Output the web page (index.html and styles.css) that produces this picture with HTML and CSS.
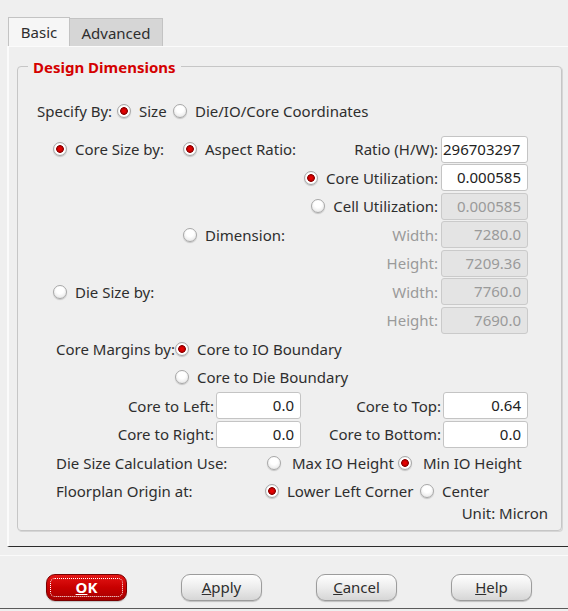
FILE: index.html
```html
<!DOCTYPE html>
<html>
<head>
<meta charset="utf-8">
<link rel="stylesheet" href="styles.css">
</head>
<body>
<div class="window">
  <div class="tabbar">
    <div class="tab tab-basic">Basic</div>
    <div class="tab tab-adv">Advanced</div>
  </div>
  <div class="pane">
    <div class="group">
      <div class="group-title">Design Dimensions</div>

      <div class="row row-specify">
        <span class="lbl-specify">Specify By:</span>
        <span class="radio w-size"><span class="dot on"></span>Size</span>
        <span class="radio"><span class="dot"></span>Die/IO/Core Coordinates</span>
      </div>

      <div class="block-size">
        <div class="row">
          <span class="c1 radio"><span class="dot on"></span>Core Size by:</span>
          <span class="c2 radio"><span class="dot on"></span>Aspect Ratio:</span>
          <span class="rlabel">Ratio (H/W):</span>
          <span class="field f-ratio">296703297</span>
        </div>
        <div class="row">
          <span class="c1"></span>
          <span class="c2"></span>
          <span class="rlabel radio"><span class="dot on"></span>Core Utilization:</span>
          <span class="field">0.000585</span>
        </div>
        <div class="row">
          <span class="c1"></span>
          <span class="c2"></span>
          <span class="rlabel radio"><span class="dot"></span>Cell Utilization:</span>
          <span class="field disabled">0.000585</span>
        </div>
        <div class="row">
          <span class="c1"></span>
          <span class="c2 radio"><span class="dot"></span>Dimension:</span>
          <span class="rlabel muted">Width:</span>
          <span class="field disabled">7280.0</span>
        </div>
        <div class="row">
          <span class="c1"></span>
          <span class="c2"></span>
          <span class="rlabel muted">Height:</span>
          <span class="field disabled">7209.36</span>
        </div>
        <div class="row">
          <span class="c1 radio"><span class="dot"></span>Die Size by:</span>
          <span class="c2"></span>
          <span class="rlabel muted">Width:</span>
          <span class="field disabled">7760.0</span>
        </div>
        <div class="row">
          <span class="c1"></span>
          <span class="c2"></span>
          <span class="rlabel muted">Height:</span>
          <span class="field disabled">7690.0</span>
        </div>
      </div>

      <div class="block-margins">
        <div class="row">
          <span class="m-label">Core Margins by:</span>
          <span class="radio"><span class="dot on"></span>Core to IO Boundary</span>
        </div>
        <div class="row">
          <span class="m-label"></span>
          <span class="radio"><span class="dot"></span>Core to Die Boundary</span>
        </div>
        <div class="row">
          <span class="e-label">Core to Left:</span>
          <span class="field f-small">0.0</span>
          <span class="e-label2">Core to Top:</span>
          <span class="field f-small">0.64</span>
        </div>
        <div class="row">
          <span class="e-label">Core to Right:</span>
          <span class="field f-small">0.0</span>
          <span class="e-label2">Core to Bottom:</span>
          <span class="field f-small">0.0</span>
        </div>
        <div class="row">
          <span class="d-label">Die Size Calculation Use:</span>
          <span class="radio w-max"><span class="dot wide"></span>Max IO Height</span>
          <span class="radio"><span class="dot wide on"></span>Min IO Height</span>
        </div>
        <div class="row">
          <span class="f-label">Floorplan Origin at:</span>
          <span class="radio w-lower"><span class="dot on"></span>Lower Left Corner</span>
          <span class="radio"><span class="dot"></span>Center</span>
        </div>
      </div>

      <div class="unit-row">Unit: Micron</div>
    </div>
  </div>
  <div class="footer">
    <div class="sep"></div>
    <div class="buttons">
      <div class="btn btn-ok"><span><u>O</u>K</span></div>
      <div class="btn"><span><u>A</u>pply</span></div>
      <div class="btn"><span><u>C</u>ancel</span></div>
      <div class="btn"><span><u>H</u>elp</span></div>
    </div>
    <div class="bottom-line"></div>
  </div>
</div>
</body>
</html>
```

FILE: styles.css
```css
html, body {
  margin: 0;
  padding: 0;
}
body {
  width: 568px;
  height: 611px;
  overflow: hidden;
  background: #efefef;
  font-family: "Noto Sans", "Open Sans", "DejaVu Sans", sans-serif;
  font-size: 15px;
  color: #2e2e2e;
}
.window {
  width: 568px;
  height: 611px;
  overflow: hidden;
}
.tabbar {
  display: flex;
  padding: 17px 0 0 8px;
  height: 29px;
}
.tab {
  box-sizing: border-box;
  height: 29px;
  border: 1px solid #c3c3c3;
  border-bottom: none;
  display: flex;
  align-items: center;
  justify-content: center;
  color: #2e2e2e;
}
.tab-basic {
  width: 62px;
  background: #f6f6f6;
}
.tab-adv {
  width: 93px;
  height: 28px;
  margin-top: 1px;
  border-left: none;
  background: #d6d6d6;
}
.pane {
  box-sizing: border-box;
  width: 600px;
  height: 501px;
  margin-left: 7px;
  border-left: 2px solid #fbfbfb;
  border-top: 1px solid #fbfbfb;
  border-bottom: 1px solid #2c2c2c;
  padding: 19px 0 0 8px;
}
.group {
  box-sizing: border-box;
  position: relative;
  width: 545px;
  height: 465px;
  border: 1px solid #c6c6c6;
  border-radius: 4px;
  box-shadow: 1px 1px 0 #d6d6d6;
  padding-top: 30px;
}
.group-title {
  position: absolute;
  top: -11px;
  left: 10px;
  padding: 0 5px;
  line-height: 22px;
  background: #efefef;
  color: #d40000;
  font-weight: bold;
}
.row {
  display: flex;
  align-items: center;
  height: 28.5px;
  white-space: nowrap;
}
.radio {
  display: inline-flex;
  align-items: center;
}
.dot {
  box-sizing: border-box;
  display: inline-block;
  width: 14px;
  height: 14px;
  flex: none;
  margin-right: 8px;
  border-radius: 50%;
  border: 1px solid #a8a8a8;
  background: radial-gradient(circle at 50% 35%, #ffffff 0, #ffffff 35%, #dedede 100%);
  box-shadow: 0 1px 1px rgba(0, 0, 0, 0.18);
}
.dot.on {
  background: radial-gradient(circle at 50% 50%, #f20000 0, #d40000 2px, #8a0000 3.5px, #ffffff 4.2px, #ffffff 5px, #dcdcdc 7px);
}
.dot.wide {
  margin-right: 11px;
}
.row-specify {
  height: 28px;
  padding-left: 19px;
}
.lbl-specify {
  width: 80px;
}
.w-size {
  width: 56px;
}
.block-size {
  margin-top: 10px;
  padding-left: 35px;
  padding-right: 33px;
}
.c1 {
  width: 130px;
  flex: none;
}
.c2 {
  flex: 1;
}
.rlabel {
  margin-right: 3px;
}
.muted {
  color: #9a9a9a;
}
.field {
  box-sizing: border-box;
  width: 87px;
  height: 27px;
  flex: none;
  border: 1px solid #c4c4c4;
  border-radius: 3px;
  background: #ffffff;
  color: #222;
  text-align: right;
  padding-right: 6px;
  line-height: 25px;
  overflow: hidden;
}
.field.disabled {
  background: #e4e4e4;
  color: #9a9a9a;
  border-color: #cacaca;
}
.f-ratio {
  padding-left: 1px;
  padding-right: 1px;
  text-align: left;
}
.f-small {
  width: 85px;
}
.block-margins {
  padding-left: 38px;
  padding-right: 33px;
}
.m-label {
  width: 119px;
  flex: none;
}
.e-label {
  width: 158px;
  flex: none;
  text-align: right;
  margin-right: 2px;
}
.e-label2 {
  flex: 1;
  text-align: right;
  margin-right: 2px;
}
.d-label {
  width: 211px;
  flex: none;
}
.w-max {
  width: 131px;
}
.f-label {
  width: 209px;
  flex: none;
}
.w-lower {
  width: 155px;
}
.unit-row {
  height: 17px;
  line-height: 15px;
  text-align: right;
  padding-right: 13px;
}
.footer {
  height: 64px;
  padding-top: 8px;
  box-sizing: border-box;
}
.sep {
  height: 1px;
  background: #fafafa;
}
.buttons {
  display: flex;
  gap: 54px;
  padding-left: 46px;
  margin-top: 18px;
}
.btn {
  box-sizing: border-box;
  position: relative;
  width: 81px;
  height: 27px;
  border: 1px solid #9c9c9c;
  border-radius: 9px;
  background: linear-gradient(#fefefe, #ececec 50%, #d6d6d6);
  box-shadow: 0 1px 1px rgba(0, 0, 0, 0.2);
  display: flex;
  align-items: center;
  justify-content: center;
  line-height: 1;
  color: #2e2e2e;
}
.btn-ok {
  border-color: #7a0000;
  background: linear-gradient(#e41515, #c80000 50%, #a60000);
  color: #ffffff;
  font-weight: bold;
}
.btn-ok::after {
  content: "";
  position: absolute;
  top: 3px;
  left: 3px;
  right: 3px;
  bottom: 3px;
  border: 1px dotted #ffffff;
  border-radius: 5px;
}
.bottom-line {
  margin-top: 7px;
  height: 1px;
  background: #5a5a5a;
}
```
